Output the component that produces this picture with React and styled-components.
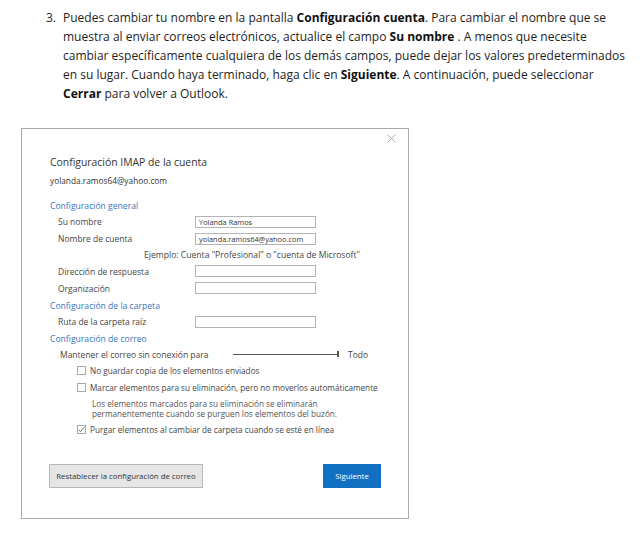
import React from "react";
import styled, { createGlobalStyle } from "styled-components";

const GlobalStyle = createGlobalStyle`
    body {
        margin: 0;
        background: #ffffff;
        font-family: "Open Sans", "Noto Sans", sans-serif;
    }
`;

const Page = styled.div`
    width: 643px;
    height: 536px;
    padding: 8px 0 0 21px;
    box-sizing: border-box;
    overflow: hidden;
`;

const Step = styled.div`
    display: flex;
    margin-left: 25px;
    font-size: 12px;
    line-height: 19px;
    color: #1e1e1e;
`;

const StepNum = styled.span`
    width: 17px;
    flex-shrink: 0;
`;

const StepText = styled.p`
    margin: 0;
    white-space: nowrap;

    b {
        font-weight: 700;
        color: #111;
    }
`;

const Dialog = styled.div`
    margin-top: 25px;
    width: 388px;
    height: 391px;
    box-sizing: border-box;
    border: 1px solid #a9a9a9;
    display: flex;
    flex-direction: column;
    color: #454545;
    font-size: 8.5px;
`;

const TopBar = styled.div`
    height: 25px;
    display: flex;
    justify-content: flex-end;
    align-items: flex-start;
    padding: 5px 12px 0 0;
    box-sizing: border-box;
`;

const Close = styled.svg`
    width: 9px;
    height: 9px;
`;

const Body = styled.div`
    padding: 0 0 0 28px;
    display: flex;
    flex-direction: column;
    white-space: nowrap;
`;

const Title = styled.div`
    height: 16px;
    line-height: 16px;
    font-size: 10.4px;
    color: #333;
`;

const Email = styled.div`
    margin-top: 4px;
    height: 14px;
    line-height: 14px;
    font-size: 8.3px;
    color: #333;
`;

const Section = styled.div`
    height: ${(p) => p.$h}px;
    margin-top: ${(p) => p.$mt || 0}px;
    display: flex;
    align-items: center;
    color: #3b74bd;
    font-size: 8.6px;
`;

const Row = styled.div`
    height: ${(p) => p.$h}px;
    display: flex;
    align-items: center;
    padding-left: ${(p) => p.$indent}px;
    font-size: ${(p) => p.$fs || 8.5}px;
`;

const Label = styled.span`
    width: 137px;
    flex-shrink: 0;
`;

const Input = styled.div`
    width: 121px;
    height: 12px;
    box-sizing: border-box;
    border: 1px solid #b4b4b4;
    padding-left: 3px;
    font-size: 7.4px;
    line-height: 10px;
    color: #333;
    overflow: hidden;
`;

const Hint = styled.div`
    height: 16px;
    display: flex;
    align-items: center;
    padding-left: 94px;
    font-size: 8.6px;
`;

const SliderLabel = styled.span`
    width: 173px;
    flex-shrink: 0;
`;

const Slider = styled.div`
    width: 105px;
    height: 1px;
    background: #555;
    position: relative;
    margin-right: 10px;

    &::after {
        content: "";
        position: absolute;
        right: -1px;
        top: -3px;
        width: 2px;
        height: 6px;
        background: #555;
    }
`;

const Box = styled.span`
    width: 9px;
    height: 9px;
    box-sizing: border-box;
    border: 1px solid #a8a8a8;
    margin-right: 4px;
    flex-shrink: 0;
    display: flex;
    align-items: center;
    justify-content: center;
`;

const Note = styled.div`
    height: 26px;
    padding: 4px 0 0 42px;
    box-sizing: border-box;
    font-size: 8.2px;
    line-height: 10px;
    color: #555;
`;

const Footer = styled.div`
    margin-top: 27px;
    padding: 0 27px 0 27px;
    display: flex;
    justify-content: space-between;
`;

const Button = styled.div`
    height: 24px;
    box-sizing: border-box;
    display: flex;
    align-items: center;
    justify-content: center;
    font-size: 7.8px;
    width: ${(p) => (p.$primary ? 58 : 154)}px;
    background: ${(p) => (p.$primary ? "#1170c2" : "#e5e5e5")};
    color: ${(p) => (p.$primary ? "#ffffff" : "#333")};
    border: 1px solid ${(p) => (p.$primary ? "#1170c2" : "#b7b7b7")};
`;

const Check = ({ checked, children, h }) => (
    <Row $h={h} $indent={27} $fs={8.2}>
        <Box>
            {checked && (
                <svg width="7" height="7" viewBox="0 0 7 7">
                    <path d="M0.8 3.8 L2.6 5.6 L6.2 1.2" fill="none" stroke="#555" strokeWidth="0.9" />
                </svg>
            )}
        </Box>
        <span>{children}</span>
    </Row>
);

const Field = ({ label, value, h }) => (
    <Row $h={h} $indent={8}>
        <Label>{label}</Label>
        <Input>{value}</Input>
    </Row>
);

const App = () => {
    return (
        <Page>
            <GlobalStyle />
            <Step>
                <StepNum>3.</StepNum>
                <StepText>
                    Puedes cambiar tu nombre en la pantalla <b>Configuración cuenta</b>. Para cambiar el nombre que se
                    <br />
                    muestra al enviar correos electrónicos, actualice el campo <b>Su nombre</b> . A menos que necesite
                    <br />
                    cambiar específicamente cualquiera de los demás campos, puede dejar los valores predeterminados
                    <br />
                    en su lugar. Cuando haya terminado, haga clic en <b>Siguiente</b>. A continuación, puede seleccionar
                    <br />
                    <b>Cerrar</b> para volver a Outlook.
                </StepText>
            </Step>

            <Dialog>
                <TopBar>
                    <Close viewBox="0 0 9 9">
                        <path d="M0.5 0.5 L8.5 8.5 M8.5 0.5 L0.5 8.5" stroke="#9a9a9a" strokeWidth="0.8" />
                    </Close>
                </TopBar>
                <Body>
                    <Title>Configuración IMAP de la cuenta</Title>
                    <Email>yolanda.ramos64@yahoo.com</Email>

                    <Section $h={14} $mt={11}>Configuración general</Section>
                    <Field h={17} label="Su nombre" value="Yolanda Ramos" />
                    <Field h={17} label="Nombre de cuenta" value="yolanda.ramos64@yahoo.com" />
                    <Hint>Ejemplo: Cuenta "Profesional" o "cuenta de Microsoft"</Hint>
                    <Field h={16} label="Dirección de respuesta" />
                    <Field h={18} label="Organización" />

                    <Section $h={18}>Configuración de la carpeta</Section>
                    <Field h={13} label="Ruta de la carpeta raíz" />

                    <Section $h={14} $mt={4}>Configuración de correo</Section>
                    <Row $h={16} $indent={10}>
                        <SliderLabel>Mantener el correo sin conexión para</SliderLabel>
                        <Slider />
                        <span>Todo</span>
                    </Row>
                    <Check h={17}>No guardar copia de los elementos enviados</Check>
                    <Check h={16}>Marcar elementos para su eliminación, pero no moverlos automáticamente</Check>
                    <Note>
                        Los elementos marcados para su eliminación se eliminarán
                        <br />
                        permanentemente cuando se purguen los elementos del buzón.
                    </Note>
                    <Check h={16} checked>
                        Purgar elementos al cambiar de carpeta cuando se esté en línea
                    </Check>
                </Body>
                <Footer>
                    <Button>Restablecer la configuración de correo</Button>
                    <Button $primary>Siguiente</Button>
                </Footer>
            </Dialog>
        </Page>
    );
};

export default App;
